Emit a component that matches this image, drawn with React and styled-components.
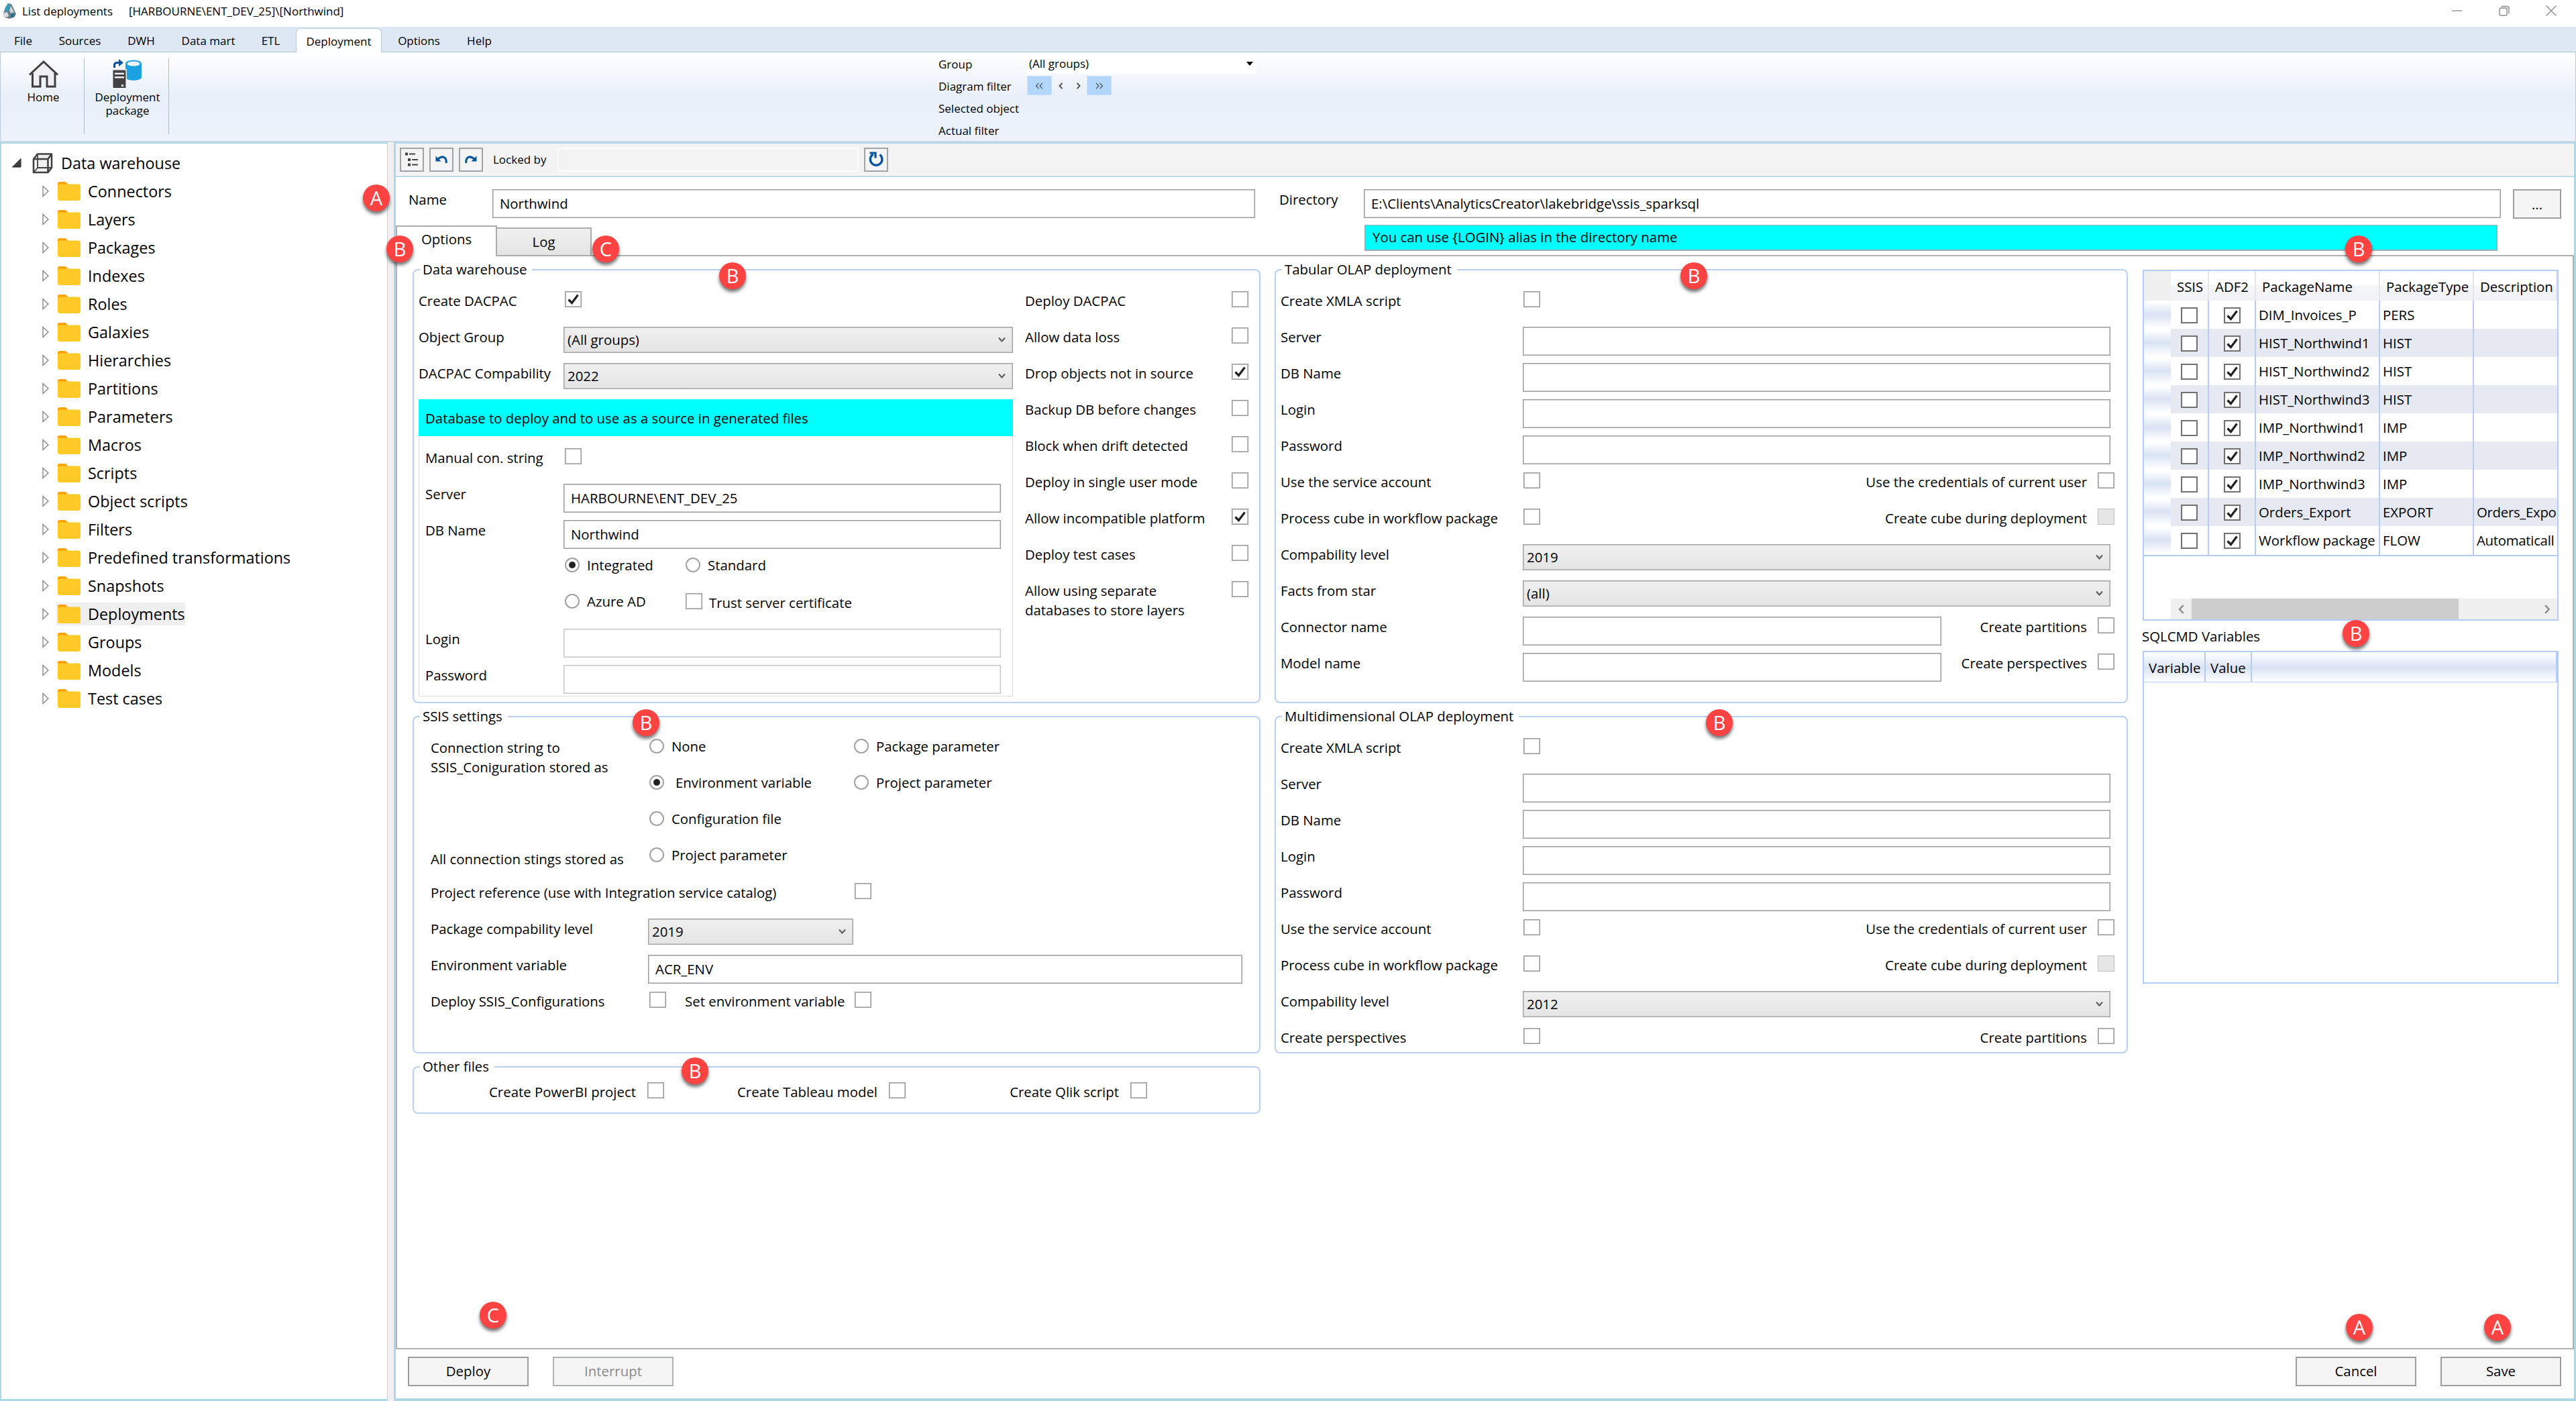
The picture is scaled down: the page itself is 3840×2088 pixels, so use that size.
import React from "react";
import styled, { createGlobalStyle, css } from "styled-components";

const GlobalStyle = createGlobalStyle`
  * {
    box-sizing: border-box;
  }
  body {
    margin: 0;
    background: #fff;
    color: #000;
    font-family: "Open Sans", "Noto Sans", sans-serif;
    font-size: 20.4px;
    line-height: 29px;
    white-space: nowrap;
  }
`;

const Window = styled.div`
  position: relative;
  width: 3840px;
  height: 2088px;
  display: flex;
  flex-direction: column;
  overflow: hidden;
`;

/* title bar */

const TitleBar = styled.header`
  height: 40px;
  padding: 0 29px 8px 3px;
  display: flex;
  align-items: center;
  font-size: 17px;
`;

const Title = styled.span`
  width: 159px;
  margin-left: 8px;
`;

const WindowButtons = styled.div`
  display: flex;
  gap: 54px;
  margin-left: auto;
`;

/* menu */

const Menu = styled.nav`
  height: 38px;
  padding: 2px 0 0 1px;
  display: flex;
  background: #dee8f4;
  border-bottom: 1px solid #b0c3d8;
`;

const MenuItem = styled.div`
  width: ${props => props.$width}px;
  font-size: 17px;
  line-height: 38px;
  text-align: center;
  ${props => props.$active && css`
    height: 36px;
    margin: 0 4px;
    line-height: 37px;
    background: #fdfeff;
    border: 1px solid #b8c9de;
    border-bottom: 0;
    border-radius: 6px 6px 0 0;
  `}
`;

/* ribbon */

const Ribbon = styled.div`
  height: 134px;
  display: flex;
  padding-top: 9px;
  border: 1px solid #b9c9dd;
  border-top: 0;
  border-bottom: 2px solid #ccd6e6;
  background: linear-gradient(#fff 0%, #e9f0f9 48%, #edf2fb 100%);
`;

const RibbonGroup = styled.div`
  width: ${props => props.$width}px;
  height: 113px;
  padding: 1px 0 0 3px;
  display: flex;
  flex-direction: column;
  align-items: center;
  gap: 3px;
  border-right: 1px solid #a9c0da;
  font-size: 17px;
  line-height: 20px;
  text-align: center;
  white-space: pre-line;
`;

const RibbonFilters = styled.div`
  margin-left: 1147px;
  margin-top: -8px;
  display: grid;
  grid-template-columns: 132px 342px;
  grid-auto-rows: 33px;
  font-size: 17px;
  line-height: 33px;
`;

const GroupSelect = styled.div`
  height: 31px;
  padding: 0 5px 0 3px;
  display: flex;
  align-items: center;
  justify-content: space-between;
  background: #fff;
`;

const FilterNav = styled.div`
  display: flex;
  align-items: center;
  height: 30px;
  padding-top: 1px;
`;

const FilterButton = styled.div`
  width: ${props => (props.$filled ? 37 : 26)}px;
  height: 29px;
  display: flex;
  align-items: center;
  justify-content: center;
  ${props => props.$filled && css`
    background: #b3d7fc;
    border: 1px solid #cfe2f6;
  `}
`;

/* work area */

const Body = styled.div`
  flex: 1;
  display: flex;
  background: #f0f0f0;
`;

const TreePane = styled.aside`
  width: 578px;
  height: 1876px;
  padding-top: 8px;
  background: #fff;
  border: 2px solid #add8e6;
  border-width: 2px 1px 3px 2px;
`;

const TreeRow = styled.div`
  height: 42px;
  padding-left: ${props => (props.$root ? 16 : 60)}px;
  display: flex;
  align-items: center;
  font-size: 23.4px;
  line-height: 34px;
`;

const TreeNode = styled.div`
  height: 34px;
  margin-left: ${props => (props.$root ? 14 : 10)}px;
  padding-left: 2px;
  display: flex;
  align-items: center;
  gap: ${props => (props.$root ? 12 : 11)}px;
  background: ${props => (props.$selected ? "#efefef" : "transparent")};
`;

const MainPane = styled.main`
  width: 3253px;
  margin-left: 9px;
  display: flex;
  flex-direction: column;
  background: #fff;
  border: 3px solid #add8e6;
  border-width: 2px 3px 4px 3px;
`;

const Toolbar = styled.div`
  height: 50px;
  padding: 6px 0 0 6px;
  display: flex;
  gap: 8px;
  background: #f3f3f3;
  border-bottom: 2px solid #b9dce9;
  font-size: 17px;
  line-height: 36px;
`;

const ToolButton = styled.button`
  width: 36px;
  height: 36px;
  padding: 0;
  display: flex;
  align-items: center;
  justify-content: center;
  background: #f4f4f4;
  border: 2px solid #a0a4a7;
`;

const LockedBy = styled.div`
  width: 88px;
  margin-left: 7px;
`;

const LockedField = styled.div`
  width: 449px;
  height: 36px;
  border: 2px solid #fdfdfd;
`;

const NameRow = styled.div`
  height: 62px;
  padding: 18px 0 0 19px;
  display: grid;
  grid-template-columns: 125px 1137px 36px 126px 1695px 18px 72px;
  line-height: 30px;
`;

const TabRow = styled.div`
  height: 46px;
  margin: 10px 0 -2px;
  display: flex;
  align-items: flex-end;
`;

const Tab = styled.div`
  width: ${props => (props.$active ? 151 : 141)}px;
  height: ${props => (props.$active ? 46 : 43)}px;
  padding-bottom: ${props => (props.$active ? 7 : 0)}px;
  display: flex;
  align-items: center;
  justify-content: center;
  z-index: ${props => (props.$active ? 1 : 0)};
  background: ${props => (props.$active ? "#fff" : "linear-gradient(#f0f0f0, #e4e4e4)")};
  border: 2px solid #acacac;
  border-width: ${props => (props.$active ? "2px 2px 0 2px" : "2px 2px 2px 0")};
`;

const AliasHint = styled.div`
  width: 1689px;
  height: 39px;
  align-self: flex-start;
  margin: -1px 0 0 1152px;
  padding-left: 10px;
  line-height: 35px;
  background: #00ffff;
  border: 1px solid #9fb0b0;
  border-width: 1px 2px 2px 2px;
`;

const TabPanel = styled.div`
  height: 1631px;
  padding: 6px 0 0 23px;
  display: grid;
  grid-template-columns: 1264px 1272px 620px;
  column-gap: 21px;
  align-items: start;
  border: 2px solid #b0b0b0;
`;

const Column = styled.div`
  display: flex;
  flex-direction: column;
  gap: 6px;
`;

const GridStack = styled(Column)`
  padding: 14px 0 0 1px;
  width: 621px;
`;

const GroupBox = styled.fieldset`
  height: ${props => props.$height}px;
  min-width: 0;
  margin: 0;
  padding: ${props => props.$pad};
  border: 2px solid #b9d0f5;
  border-radius: 8px;
`;

const Legend = styled.legend`
  height: 28px;
  margin-left: ${props => props.$indent}px;
  padding: 0 8px 0 4px;
  line-height: 26px;
`;

/* form parts */

const Row = styled.div`
  height: 54px;
  display: flex;
  align-items: flex-start;
`;

const Label = styled.div`
  width: ${props => props.$width}px;
  flex: none;
  padding-top: ${props => props.$drop || 0}px;
  margin-left: ${props => props.$left || 0}px;
  white-space: pre-line;
`;

const RightLabel = styled.div`
  margin-left: auto;
  padding-right: 16px;
`;

const Input = styled.div`
  width: ${props => (props.$width ? props.$width + "px" : "auto")};
  height: 43px;
  margin-top: ${props => (props.$inHeader ? 0 : -1)}px;
  padding-left: 10px;
  line-height: 41px;
  background: #fff;
  border: 1px solid ${props => (props.$disabled ? "#c6c6c6" : "#9b9b9b")};
  box-shadow: inset 0 0 0 1px ${props => (props.$disabled ? "#e2e2e2" : "#cbcbcb")};
`;

const SelectBox = styled.div`
  width: ${props => props.$width}px;
  height: 39px;
  margin-top: -1px;
  padding: 0 10px 0 5px;
  display: flex;
  align-items: center;
  justify-content: space-between;
  line-height: 37px;
  background: linear-gradient(#f0f0f0, #e4e4e4);
  border: 1px solid #a3a3a3;
  box-shadow: inset 0 0 0 1px #c6c6c6;
`;

const Box = styled.div`
  width: 25px;
  height: 24px;
  flex: none;
  margin-left: ${props => props.$left || 0}px;
  display: flex;
  align-items: center;
  justify-content: center;
  background: ${props => (props.$disabled ? "#e6e6e6" : "#fff")};
  border: ${props => (props.$dark ? "2px solid #707070" : "1px solid #999")};
  box-shadow: ${props => (props.$dark ? "none" : "inset 0 0 0 1px #c4c4c4")};
  ${props => props.$disabled && css`
    border-color: #bcbcbc;
    box-shadow: none;
  `}
`;

const RadioOption = styled.div`
  width: ${props => props.$width}px;
  height: 24px;
  margin-left: ${props => props.$left || 0}px;
  display: flex;
  align-items: center;
  gap: ${props => props.$gap || 11}px;
`;

const Circle = styled.div`
  width: 22px;
  height: 22px;
  display: flex;
  align-items: center;
  justify-content: center;
  background: #fff;
  border: 2px solid #a2a2a2;
  border-radius: 50%;
`;

const Dot = styled.div`
  width: 10px;
  height: 10px;
  border-radius: 50%;
  background: #212121;
`;

const TwoColumns = styled.div`
  display: flex;
  gap: 18px;
`;

const LeftSide = styled.div`
  width: 886px;
`;

const Connection = styled.div`
  height: 443px;
  margin-top: -1px;
  border: 1px solid #dcdcdc;
  border-top: 0;
`;

const ConnectionHint = styled.div`
  height: 55px;
  margin: 0 -1px 18px;
  padding-left: 10px;
  line-height: 56px;
  background: #00ffff;
`;

const OtherCell = styled.div`
  width: 360px;
  display: flex;
  justify-content: flex-end;
  gap: 17px;
`;

/* grids */

const Grid = styled.div`
  height: ${props => props.$height}px;
  display: flex;
  flex-direction: column;
  border: 2px solid #b3cdf6;
  overflow: hidden;
`;

const PackageRow = styled.div`
  display: grid;
  grid-template-columns: 40px 57px 70px 185px 140px 124px;
  height: 42px;
  background: ${props => (props.$alt ? "#e6e9f1" : "#fff")};
`;

const PackageHeader = styled(PackageRow)`
  height: 44px;
`;

const HeaderCell = styled.div`
  padding-left: 9px;
  line-height: 46px;
  background: linear-gradient(#fff 45%, #f5f6f8 46%, #f0f1f4);
  border-right: 2px solid #e4e6ea;
  border-bottom: 2px solid #dcdcdc;
`;

const Corner = styled.div`
  background: #f0f0f0;
`;

const RowHeader = styled.div`
  background: linear-gradient(#fff 5%, #d9e2f4 48%, #fff 95%);
  border-bottom: 2px solid #b3cdf6;
`;

const Cell = styled.div`
  padding-left: 4px;
  line-height: 43px;
  border-right: 2px solid #b3cdf6;
  border-bottom: 2px solid #b3cdf6;
  &:last-child {
    border-right: 0;
    letter-spacing: -0.3px;
  }
`;

const CheckCell = styled(Cell)`
  padding: 0;
  display: flex;
  align-items: center;
  justify-content: center;
`;

const ScrollBar = styled.div`
  height: 31px;
  margin: auto 0 0 40px;
  display: flex;
  align-items: center;
  background: #f0f0f0;
`;

const ScrollButton = styled.div`
  width: 31px;
  display: flex;
  justify-content: center;
`;

const Thumb = styled.div`
  width: 398px;
  height: 31px;
  margin-right: auto;
  background: #cdcdcd;
`;

const VariablesTitle = styled.div`
  margin: 3px 0 1px -1px;
`;

const VariablesHeader = styled.div`
  height: 45px;
  display: flex;
  line-height: 47px;
  background: linear-gradient(#fff 3%, #d9e2f4 52%, #fdfdff 97%);
  border-bottom: 1px solid #b3cdf6;
`;

const VariablesCell = styled.div`
  width: ${props => props.$width}px;
  padding-left: 7px;
  border-right: 2px solid #b3cdf6;
`;

/* bottom buttons */

const Footer = styled.footer`
  flex: 1;
  padding: 11px 19px 0 18px;
  display: flex;
  gap: 36px;
`;

const Button = styled.button`
  width: ${props => props.$width || 180}px;
  height: 44px;
  padding: 0 0 1px;
  font: inherit;
  color: ${props => (props.disabled ? "#8a8a8a" : "#000")};
  background: #f5f5f5;
  border: 2px solid ${props => (props.disabled ? "#adb2b5" : "#9e9e9e")};
`;

const Spacer = styled.div`
  flex: 1;
`;

/* callouts lie over the window */

const Callout = styled.div`
  position: absolute;
  left: ${props => props.$x - 20}px;
  top: ${props => props.$y - 20}px;
  width: 40px;
  height: 40px;
  z-index: 5;
  border-radius: 50%;
  background: #ff4242;
  color: #fff;
  font-size: 29px;
  line-height: 40px;
  text-align: center;
  box-shadow: 0 4px 5px rgba(0, 0, 0, 0.55);
`;

const menu = [
  ["File", 67],
  ["Sources", 102],
  ["DWH", 81],
  ["Data mart", 119],
  ["ETL", 67],
  ["Deployment", 128],
  ["Options", 103],
  ["Help", 77],
];

const folders = [
  "Connectors",
  "Layers",
  "Packages",
  "Indexes",
  "Roles",
  "Galaxies",
  "Hierarchies",
  "Partitions",
  "Parameters",
  "Macros",
  "Scripts",
  "Object scripts",
  "Filters",
  "Predefined transformations",
  "Snapshots",
  "Deployments",
  "Groups",
  "Models",
  "Test cases",
];

const deployFlags = [
  ["Deploy DACPAC", false],
  ["Allow data loss", false],
  ["Drop objects not in source", true],
  ["Backup DB before changes", false],
  ["Block when drift detected", false],
  ["Deploy in single user mode", false],
  ["Allow incompatible platform", true],
  ["Deploy test cases", false],
  ["Allow using separate\ndatabases to store layers", false],
];

const packages = [
  ["DIM_Invoices_P", "PERS", ""],
  ["HIST_Northwind1", "HIST", ""],
  ["HIST_Northwind2", "HIST", ""],
  ["HIST_Northwind3", "HIST", ""],
  ["IMP_Northwind1", "IMP", ""],
  ["IMP_Northwind2", "IMP", ""],
  ["IMP_Northwind3", "IMP", ""],
  ["Orders_Export", "EXPORT", "Orders_Expo"],
  ["Workflow package", "FLOW", "Automaticall"],
];

const callouts = [
  ["A", 561, 295],
  ["B", 596, 371],
  ["C", 903, 371],
  ["B", 1092, 411],
  ["B", 2525, 411],
  ["B", 3516, 371],
  ["B", 3512, 944],
  ["B", 963, 1077],
  ["B", 2563, 1077],
  ["B", 1036, 1596],
  ["C", 735, 1960],
  ["A", 3517, 1978],
  ["A", 3723, 1978],
];

const AppIcon = () => (
  <svg width="22" height="24" viewBox="0 0 22 24">
    <path d="M9 1l5 1 3 6 4 9-3 5-7 2-7-2-2-6 3-9z" fill="#6f7f88" />
    <path d="M9 1l3 3-2 7-6 3 2-8z" fill="#2f9fc4" />
    <path d="M13 5l5 9-4 2-3-4z" fill="#c9d5db" />
    <path d="M3 15l5-1 2 6-4 2-4-2z" fill="#d5dde1" />
    <path d="M14 16l5 1-2 4-4 1z" fill="#1d6f93" />
  </svg>
);

const MinimizeIcon = () => (
  <svg width="16" height="16" viewBox="0 0 16 16">
    <path d="M0 8h15" stroke="#8a8a8a" strokeWidth="1.3" />
  </svg>
);

const RestoreIcon = () => (
  <svg width="16" height="16" viewBox="0 0 16 16" fill="none" stroke="#8a8a8a" strokeWidth="1.4">
    <rect x="1" y="4" width="11" height="11" rx="2" />
    <path d="M4 1.5h8a3 3 0 0 1 3 3v8" />
  </svg>
);

const CloseIcon = () => (
  <svg width="16" height="16" viewBox="0 0 16 16">
    <path d="M.5 .5l15 15M15.5 .5l-15 15" stroke="#8a8a8a" strokeWidth="1.3" />
  </svg>
);

const HomeIcon = () => (
  <svg width="46" height="44" viewBox="0 0 46 44">
    <path d="M6 20L23 5l17 15v20H29V25H18v15H6z" fill="#f0f0f2" />
    <path d="M2 23.5L23 4l21 19.500" fill="none" stroke="#3f3f41" strokeWidth="3" />
    <path d="M6.500 21v20H18V26h10v15h12V21" fill="none" stroke="#3f3f41" strokeWidth="3" />
  </svg>
);

const DeployIcon = () => (
  <svg width="46" height="44" viewBox="0 0 46 44">
    <path d="M20 7v20a12 5 0 0 0 24 0V7z" fill="#1ba1e2" />
    <ellipse cx="32" cy="7" rx="12" ry="5.500" fill="#1ba1e2" />
    <ellipse cx="32" cy="7" rx="9.500" ry="3.600" fill="#eef1f6" />
    <path d="M0 15h22v29H0z" fill="#f3f6fb" />
    <path d="M1.500 16.500h19V43h-19z" fill="#424242" />
    <path d="M4 20.500h14v2.500H4zM4 26h14v2.500H4zM14 38h3v3h-3z" fill="#f0eff1" />
    <path d="M3.500 13V9.500q0-4 4-4H12" fill="none" stroke="#00539c" strokeWidth="3" />
    <path d="M10 0l7 5.500-7 5.500z" fill="#00539c" />
  </svg>
);

const CubeIcon = () => (
  <svg width="31" height="31" viewBox="0 0 31 31" strokeLinejoin="round">
    <path d="M1.500 29.500L7 22V1.500h22.500L24 9v20.500z" fill="#f0eff1" />
    <path d="M2 9l6-7.500h21L23.500 9zM2 9h21.500v20H2zM23.500 9L29 1.500V22l-5.500 7" fill="none" stroke="#424242" strokeWidth="2.600" />
    <path d="M8 1.500V22h21M8 22l-6 7" fill="none" stroke="#424242" strokeWidth="1.800" />
  </svg>
);

const FolderIcon = () => (
  <svg width="34" height="28" viewBox="0 0 34 28">
    <path d="M0 3a3 3 0 0 1 3-3h8q1.500 0 2.500 1.500L15.500 4v5H0z" fill="#ffa000" />
    <path d="M0 5.500A2.500 2.500 0 0 1 2.500 3.500H31a3 3 0 0 1 3 3V25a3 3 0 0 1-3 3H3a3 3 0 0 1-3-3z" fill="#ffca28" />
  </svg>
);

const OpenArrow = () => (
  <svg width="14" height="14" viewBox="0 0 14 14">
    <path d="M13 .5V13H.5z" fill="#404040" stroke="#262626" />
  </svg>
);

const ClosedArrow = () => (
  <svg width="12" height="18" viewBox="0 0 12 18">
    <path d="M2 1.500v15L10 9z" fill="#fff" stroke="#8a8a8a" strokeWidth="1.400" />
  </svg>
);

const ListIcon = () => (
  <svg width="24" height="26" viewBox="0 0 24 26" fill="#424242">
    <path d="M2 2.500h4v4H2zM8 3.500h9v2H8zM6 11h4v4H6zM12 12h9v2h-9zM6 18.500h4v4H6zM12 19.500h9v2h-9z" />
  </svg>
);

const UndoIcon = ({ flip }) => (
  <svg width="20" height="14" viewBox="0 0 20 14" transform={flip ? "scale(-1 1)" : undefined}>
    <path d="M1.500 1.500v8h8z" fill="#00539c" />
    <path d="M4.500 6.500Q11 .5 15.500 4.500q2.500 3 1.500 7.500" fill="none" stroke="#00539c" strokeWidth="3" />
  </svg>
);

const RefreshIcon = () => (
  <svg width="22" height="24" viewBox="0 0 22 24">
    <path d="M16.500 4.500a8.800 8.800 0 1 1-10-.5" fill="none" stroke="#00539c" strokeWidth="3.300" />
    <path d="M1.500 2h8.500v7.500" fill="none" stroke="#00539c" strokeWidth="3.200" />
  </svg>
);

const CheckMark = () => (
  <svg width="19" height="18" viewBox="0 0 19 18">
    <path d="M2.500 9.500L7.500 14.500 16.500 2.500" fill="none" stroke="#212121" strokeWidth="3.200" />
  </svg>
);

const DownChevron = () => (
  <svg width="11" height="9" viewBox="0 0 11 9">
    <path d="M1 1.500l4.500 5 4.500-5" fill="none" stroke="#606060" strokeWidth="2.200" />
  </svg>
);

const Triangle = () => (
  <svg width="10" height="6" viewBox="0 0 10 6">
    <path d="M0 0h10L5 6z" fill="#000" />
  </svg>
);

const Chevron = ({ right, double, color = "#444", size = 10 }) => (
  <svg
    width={double ? size + 3 : size * 0.7}
    height={size}
    viewBox={double ? "0 0 13 10" : "0 0 7 10"}
    transform={right ? "scale(-1 1)" : undefined}
    fill="none"
    stroke={color}
    strokeWidth={double ? 1.1 : 1.8}
  >
    <path d="M5.500 .8L1.500 5l4 4.200" />
    {double && <path d="M11 .8L7 5l4 4.200" />}
  </svg>
);

const Check = ({ checked, dark, disabled, left }) => (
  <Box $dark={dark} $disabled={disabled} $left={left}>
    {checked && <CheckMark />}
  </Box>
);

const Select = ({ width, children }) => (
  <SelectBox $width={width}>
    {children}
    <DownChevron />
  </SelectBox>
);

const Radio = ({ selected, width, left, gap, children }) => (
  <RadioOption $width={width} $left={left} $gap={gap}>
    <Circle>{selected && <Dot />}</Circle>
    {children}
  </RadioOption>
);

// Rows that the tabular and the multidimensional box have in common
const OlapRows = ({ level }) => (
  <>
    <Row>
      <Label $width={361}>Create XMLA script</Label>
      <Check left={1} />
    </Row>
    {["Server", "DB Name", "Login", "Password"].map(name => (
      <Row key={name}>
        <Label $width={361}>{name}</Label>
        <Input $width={876} />
      </Row>
    ))}
    <Row>
      <Label $width={361}>Use the service account</Label>
      <Check left={1} />
      <RightLabel>Use the credentials of current user</RightLabel>
      <Check />
    </Row>
    <Row>
      <Label $width={361}>Process cube in workflow package</Label>
      <Check left={1} />
      <RightLabel>Create cube during deployment</RightLabel>
      <Check disabled />
    </Row>
    <Row>
      <Label $width={361}>Compability level</Label>
      <Select width={876}>{level}</Select>
    </Row>
  </>
);

const DataWarehouseBox = () => (
  <GroupBox $height={660} $pad="18px 0 0 7px">
    <Legend $indent={2}>Data warehouse</Legend>
    <TwoColumns>
      <LeftSide>
        <Row>
          <Label $width={218}>Create DACPAC</Label>
          <Check checked />
        </Row>
        <Row>
          <Label $width={216}>Object Group</Label>
          <Select width={670}>(All groups)</Select>
        </Row>
        <Row>
          <Label $width={216}>DACPAC Compability</Label>
          <Select width={670}>2022</Select>
        </Row>
        <Connection>
          <ConnectionHint>Database to deploy and to use as a source in generated files</ConnectionHint>
          <Row>
            <Label $left={9} $width={208}>Manual con. string</Label>
            <Check />
          </Row>
          <Row>
            <Label $left={9} $width={206}>Server</Label>
            <Input $width={652}>HARBOURNE\ENT_DEV_25</Input>
          </Row>
          <Row>
            <Label $left={9} $width={206}>DB Name</Label>
            <Input $width={652}>Northwind</Input>
          </Row>
          <Row>
            <Radio selected left={217} width={180}>Integrated</Radio>
            <Radio>Standard</Radio>
          </Row>
          <Row>
            <Radio left={217} width={180}>Azure AD</Radio>
            <Check />
            <Label $left={10}>Trust server certificate</Label>
          </Row>
          <Row>
            <Label $left={9} $width={206}>Login</Label>
            <Input $width={652} $disabled />
          </Row>
          <Row>
            <Label $left={9} $width={206}>Password</Label>
            <Input $width={652} $disabled />
          </Row>
        </Connection>
      </LeftSide>
      <div>
        {deployFlags.map(([name, checked]) => (
          <Row key={name}>
            <Label $width={308}>{name}</Label>
            <Check checked={checked} />
          </Row>
        ))}
      </div>
    </TwoColumns>
  </GroupBox>
);

const SsisBox = () => (
  <GroupBox $height={516} $pad="18px 0 0 25px">
    <Legend $indent={-16}>SSIS settings</Legend>
    <Row>
      <Label $width={326}>{"Connection string to\nSSIS_Coniguration stored as"}</Label>
      <Radio width={305}>None</Radio>
      <Radio>Package parameter</Radio>
    </Row>
    <Row>
      <Radio selected left={326} width={305} gap={17}>Environment variable</Radio>
      <Radio>Project parameter</Radio>
    </Row>
    <Row>
      <Radio left={326}>Configuration file</Radio>
    </Row>
    <Row>
      <Label $width={326} $drop={4}>All connection stings stored as</Label>
      <Radio>Project parameter</Radio>
    </Row>
    <Row>
      <Label $width={632}>Project reference (use with Integration service catalog)</Label>
      <Check />
    </Row>
    <Row>
      <Label $width={324}>Package compability level</Label>
      <Select width={306}>2019</Select>
    </Row>
    <Row>
      <Label $width={324}>Environment variable</Label>
      <Input $width={886}>ACR_ENV</Input>
    </Row>
    <Row>
      <Label $width={326}>Deploy SSIS_Configurations</Label>
      <Check />
      <Label $left={28} $width={253}>Set environment variable</Label>
      <Check />
    </Row>
  </GroupBox>
);

const OtherFilesBox = () => (
  <GroupBox $height={84} $pad="9px 0 0 13px">
    <Legend $indent={-4}>Other files</Legend>
    <Row>
      {["Create PowerBI project", "Create Tableau model", "Create Qlik script"].map(name => (
        <OtherCell key={name}>
          {name}
          <Check />
        </OtherCell>
      ))}
    </Row>
  </GroupBox>
);

const TabularBox = () => (
  <GroupBox $height={660} $pad="18px 18px 0 7px">
    <Legend $indent={2}>Tabular OLAP deployment</Legend>
    <OlapRows level="2019" />
    <Row>
      <Label $width={361}>Facts from star</Label>
      <Select width={876}>(all)</Select>
    </Row>
    <Row>
      <Label $width={361}>Connector name</Label>
      <Input $width={624} />
      <RightLabel>Create partitions</RightLabel>
      <Check />
    </Row>
    <Row>
      <Label $width={361}>Model name</Label>
      <Input $width={624} />
      <RightLabel>Create perspectives</RightLabel>
      <Check />
    </Row>
  </GroupBox>
);

const MultidimensionalBox = () => (
  <GroupBox $height={516} $pad="18px 18px 0 7px">
    <Legend $indent={2}>Multidimensional OLAP deployment</Legend>
    <OlapRows level="2012" />
    <Row>
      <Label $width={361}>Create perspectives</Label>
      <Check left={1} />
      <RightLabel>Create partitions</RightLabel>
      <Check />
    </Row>
  </GroupBox>
);

const PackageGrid = () => (
  <Grid $height={523}>
    <PackageHeader>
      <Corner />
      <HeaderCell>SSIS</HeaderCell>
      <HeaderCell>ADF2</HeaderCell>
      <HeaderCell>PackageName</HeaderCell>
      <HeaderCell>PackageType</HeaderCell>
      <HeaderCell>Description</HeaderCell>
    </PackageHeader>
    {packages.map(([name, type, description], i) => (
      <PackageRow key={name} $alt={i % 2 === 1}>
        <RowHeader />
        <CheckCell><Check dark /></CheckCell>
        <CheckCell><Check dark checked /></CheckCell>
        <Cell>{name}</Cell>
        <Cell>{type}</Cell>
        <Cell>{description}</Cell>
      </PackageRow>
    ))}
    <ScrollBar>
      <ScrollButton><Chevron color="#8f8f8f" size={14} /></ScrollButton>
      <Thumb />
      <ScrollButton><Chevron right color="#8f8f8f" size={14} /></ScrollButton>
    </ScrollBar>
  </Grid>
);

const App = () => {
  return (
    <Window>
      <GlobalStyle />
      <TitleBar>
        <AppIcon />
        <Title>List deployments</Title>
        <span>[HARBOURNE\ENT_DEV_25]\[Northwind]</span>
        <WindowButtons>
          <MinimizeIcon />
          <RestoreIcon />
          <CloseIcon />
        </WindowButtons>
      </TitleBar>
      <Menu>
        {menu.map(([name, width]) => (
          <MenuItem key={name} $width={width} $active={name === "Deployment"}>
            {name}
          </MenuItem>
        ))}
      </Menu>
      <Ribbon>
        <RibbonGroup $width={125}>
          <HomeIcon />
          Home
        </RibbonGroup>
        <RibbonGroup $width={126}>
          <DeployIcon />
          {"Deployment\npackage"}
        </RibbonGroup>
        <RibbonFilters>
          <span>Group</span>
          <GroupSelect>
            (All groups)
            <Triangle />
          </GroupSelect>
          <span>Diagram filter</span>
          <FilterNav>
            <FilterButton $filled><Chevron double /></FilterButton>
            <FilterButton><Chevron /></FilterButton>
            <FilterButton><Chevron right /></FilterButton>
            <FilterButton $filled><Chevron double right /></FilterButton>
          </FilterNav>
          <span>Selected object</span>
          <span />
          <span>Actual filter</span>
        </RibbonFilters>
      </Ribbon>
      <Body>
        <TreePane>
          <TreeRow $root>
            <OpenArrow />
            <TreeNode $root>
              <CubeIcon />
              Data warehouse
            </TreeNode>
          </TreeRow>
          {folders.map(name => (
            <TreeRow key={name}>
              <ClosedArrow />
              <TreeNode $selected={name === "Deployments"}>
                <FolderIcon />
                {name}
              </TreeNode>
            </TreeRow>
          ))}
        </TreePane>
        <MainPane>
          <Toolbar>
            <ToolButton><ListIcon /></ToolButton>
            <ToolButton><UndoIcon /></ToolButton>
            <ToolButton><UndoIcon flip /></ToolButton>
            <LockedBy>Locked by</LockedBy>
            <LockedField />
            <ToolButton><RefreshIcon /></ToolButton>
          </Toolbar>
          <NameRow>
            <span>Name</span>
            <Input $inHeader>Northwind</Input>
            <span />
            <span>Directory</span>
            <Input $inHeader>E:\Clients\AnalyticsCreator\lakebridge\ssis_sparksql</Input>
            <span />
            <Button $width={72}>...</Button>
          </NameRow>
          <TabRow>
            <Tab $active>Options</Tab>
            <Tab>Log</Tab>
            <AliasHint>{"You can use {LOGIN} alias in the directory name"}</AliasHint>
          </TabRow>
          <TabPanel>
            <Column>
              <DataWarehouseBox />
              <SsisBox />
              <OtherFilesBox />
            </Column>
            <Column>
              <TabularBox />
              <MultidimensionalBox />
            </Column>
            <GridStack>
              <PackageGrid />
              <VariablesTitle>SQLCMD Variables</VariablesTitle>
              <Grid $height={496}>
                <VariablesHeader>
                  <VariablesCell $width={92}>Variable</VariablesCell>
                  <VariablesCell $width={69}>Value</VariablesCell>
                  <VariablesCell $width={455} />
                </VariablesHeader>
              </Grid>
            </GridStack>
          </TabPanel>
          <Footer>
            <Button>Deploy</Button>
            <Button disabled>Interrupt</Button>
            <Spacer />
            <Button>Cancel</Button>
            <Button>Save</Button>
          </Footer>
        </MainPane>
      </Body>
      {callouts.map(([letter, x, y]) => (
        <Callout key={`${x}-${y}`} $x={x} $y={y}>{letter}</Callout>
      ))}
    </Window>
  );
};

export default App;
